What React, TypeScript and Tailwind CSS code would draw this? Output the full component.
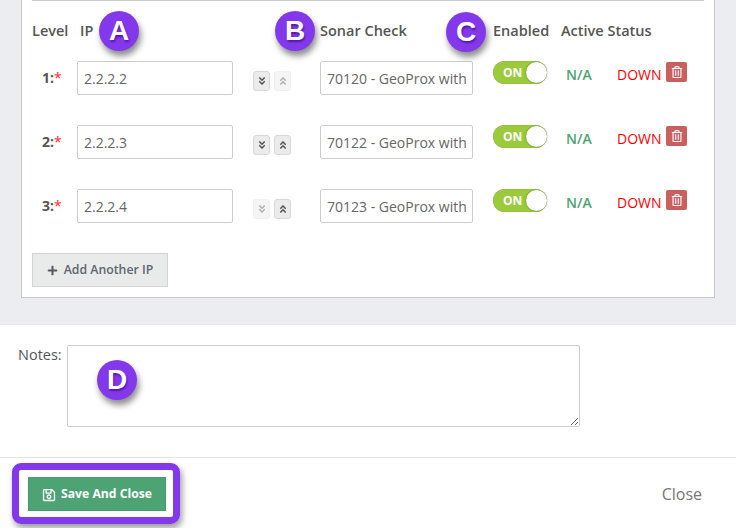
import { FaAngleDoubleDown, FaAngleDoubleUp, FaPlus, FaRegSave, FaRegTrashAlt } from "react-icons/fa"

const rows = [
    { level: "1", ip: "2.2.2.2", sonar: "70120 - GeoProx with", downOff: false, upOff: true },
    { level: "2", ip: "2.2.2.3", sonar: "70122 - GeoProx with", downOff: false, upOff: false },
    { level: "3", ip: "2.2.2.4", sonar: "70123 - GeoProx with", downOff: true, upOff: false },
]

function Badge({ letter, className }: { letter: string; className: string }) {
    return (
        <div
            className={`absolute w-10 h-10 rounded-full bg-[#8338ec] text-white flex items-center justify-center text-[28px] font-bold shadow-[2px_5px_6px_rgba(0,0,0,0.45)] font-['Liberation_Sans',sans-serif] [text-shadow:1px_2px_2px_rgba(60,0,120,0.6)] ${className}`}
        >
            {letter}
        </div>
    )
}

function MoveButton({ off, children }: { off: boolean; children: React.ReactNode }) {
    return (
        <div
            className={`w-[17px] h-5 rounded-[3px] flex items-center justify-center border ${
                off
                    ? "bg-[#f5f5f5] border-[#f0f0f0] text-[#b0b0b0]"
                    : "bg-[#ebebeb] border-[#d8d8d8] text-[#555555]"
            }`}
        >
            {children}
        </div>
    )
}

function Row({ row }: { row: (typeof rows)[number] }) {
    return (
        <div className="flex items-start h-[64px]">
            <div className="w-[45px] pt-[6px] pl-[10px] text-[14px] font-bold text-[#555555] leading-[22px]">
                {row.level}:<span className="text-[#ff2d2d] font-normal">*</span>
            </div>
            <input
                readOnly
                value={row.ip}
                className="w-[156px] h-[34px] border border-[#cccccc] rounded-[2px] px-[6px] text-[14px] text-[#666666] outline-none"
            />
            <div className="flex gap-[4px] ml-[20px] mt-[10px] w-[47px]">
                <MoveButton off={row.downOff}>
                    <FaAngleDoubleDown size={10} />
                </MoveButton>
                <MoveButton off={row.upOff}>
                    <FaAngleDoubleUp size={10} />
                </MoveButton>
            </div>
            <input
                readOnly
                value={row.sonar}
                className="ml-[20px] w-[153px] h-[34px] border border-[#cccccc] rounded-[2px] px-[6px] text-[14px] text-[#666666] outline-none"
            />
            <div className="ml-[20px] w-[54px] h-[23px] rounded-full bg-[#9bcb3c] flex items-center relative shadow-[inset_0_0_1px_rgba(0,0,0,0.3)]">
                <span className="pl-[10px] text-[12px] font-bold text-white leading-none">ON</span>
                <span className="absolute right-0 top-[1px] w-[21px] h-[21px] rounded-full bg-white shadow-[0_0_2px_rgba(0,0,0,0.45)]" />
            </div>
            <div className="ml-[19px] w-[51px] pt-[3px] text-[14px] font-semibold text-[#4ea374] leading-[22px]">N/A</div>
            <div className="w-[49px] pt-[3px] text-[14px] text-[#ff0000] leading-[22px]">DOWN</div>
            <div className="w-[21px] h-5 mt-[1px] rounded-[2px] bg-[#c9605f] flex items-center justify-center text-white">
                <FaRegTrashAlt size={12} />
            </div>
        </div>
    )
}

export default function App() {
    return (
        <div className="relative w-[736px] h-[528px] overflow-hidden bg-white font-['Open_Sans',sans-serif]">
            {/* Top area */}
            <div className="h-[325px] bg-[#ecedf1] px-[21px]">
                <div className="h-[298px] bg-white border-x border-b border-[#c8c8cc] px-[10px]">
                    <div className="border-t border-[#cccccc]" />
                    <div className="flex h-[60px] pt-[20px] text-[14.5px] font-semibold text-[#555555] leading-[20px]">
                        <span className="w-[48px]">Level</span>
                        <span className="w-[240px]">IP</span>
                        <span className="w-[173px]">Sonar Check</span>
                        <span className="w-[68px]">Enabled</span>
                        <span>Active Status</span>
                    </div>
                    {rows.map((row) => (
                        <Row key={row.level} row={row} />
                    ))}
                    <button className="h-[34px] w-[136px] bg-[#e9ebeb] border border-[#d4d4d4] flex items-center justify-center gap-[6px] text-[12.3px] font-semibold text-[#5f6670]">
                        <FaPlus size={11} className="text-[#555b63]" />
                        Add Another IP
                    </button>
                </div>
            </div>

            {/* Notes */}
            <div className="h-[133px] border-b border-[#e4e4e4] flex items-start pt-[20px] pl-[18px]">
                <label className="w-[49px] text-[14.5px] text-[#555555] leading-[20px]">Notes:</label>
                <textarea
                    readOnly
                    className="w-[513px] h-[82px] border border-[#cccccc] rounded-[2px] outline-none"
                />
            </div>

            {/* Footer */}
            <div className="flex items-center justify-between pl-[28px] pr-[34px] pt-[19px]">
                <button className="w-[138px] h-[34px] pt-[1px] bg-[#4ea374] border border-[#479a6c] text-white text-[12.2px] font-bold flex items-center justify-center gap-[5px]">
                    <FaRegSave size={14} />
                    Save And Close
                </button>
                <span className="text-[16px] text-[#777777]">Close</span>
            </div>

            {/* Annotations */}
            <Badge letter="A" className="left-[99px] top-[11px]" />
            <Badge letter="B" className="left-[275px] top-[11px]" />
            <Badge letter="C" className="left-[446px] top-[12px]" />
            <Badge letter="D" className="left-[97px] top-[360px]" />
            <div className="absolute left-[12px] top-[463px] w-[168px] h-[61px] border-[7px] border-[#8338ec] rounded-[9px] shadow-[2px_4px_6px_rgba(0,0,0,0.4)]" />
        </div>
    )
}
